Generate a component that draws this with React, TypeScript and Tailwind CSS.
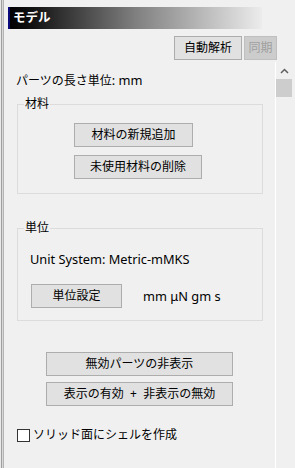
import React from "react";

const Btn = ({ children, className = "" }: { children: React.ReactNode; className?: string }) => (
  <div
    className={`h-[24px] flex items-center justify-center bg-[#e1e1e1] border border-[#adadad] text-[12px] leading-[16px] text-black ${className}`}
  >
    {children}
  </div>
);

export default function App() {
  return (
    <div className="w-[295px] h-[468px] flex bg-[#f0f0f0] overflow-hidden font-['Noto_Sans','Noto_Sans_CJK_JP',sans-serif] text-[12px] leading-[16px] text-black">
      {/* left edge */}
      <div className="w-[1px] h-full bg-[#e8e8e8]" />
      <div className="w-[1px] h-full bg-[#a0a0a0]" />
      <div className="w-[1px] h-full bg-[#d8d8d8]" />
      <div className="w-[1px] h-full bg-[#b4b4b4]" />
      <div className="flex-1 flex flex-col">
        {/* header */}
        <div className="mt-[7px] ml-[4px] w-[254px] h-[22px] flex items-center bg-[linear-gradient(to_right,#000000_0%,#151515_10%,#808080_50%,#ececec_100%)] border-l-2 border-[#0a0a7a]">
          <span className="ml-[3px] text-white font-bold text-[12.5px] leading-[16px]">モデル</span>
        </div>
        {/* top buttons */}
        <div className="mt-[7px] h-[24px] flex justify-end pr-[18px] gap-[2px]">
          <Btn className="w-[68px]">自動解析</Btn>
          <div className="w-[33px] h-[24px] flex items-center justify-center bg-[#cccccc] border border-[#bfbfbf] text-[#a0a0a0]">
            同期
          </div>
        </div>
        {/* scroll area */}
        <div className="mt-[2px] flex-1 flex">
          <div className="w-[271px] flex flex-col">
            <div className="mt-[10px] ml-[12px] h-[16px]">
              パーツの長さ単位<span className="text-[12.8px]">: mm</span>
            </div>

            <fieldset className="mt-[8px] ml-[13px] w-[246px] border border-[#dcdcdc] px-0 pt-[11px] pb-[14px] m-0">
              <legend className="ml-[6px] px-[1px] h-[16px] leading-[16px]">材料</legend>
              <div className="ml-[56px] flex flex-col gap-[8px] items-start">
                <Btn className="w-[119px]">材料の新規追加</Btn>
                <Btn className="w-[128px]">未使用材料の削除</Btn>
              </div>
            </fieldset>

            <fieldset className="mt-[26px] ml-[13px] w-[246px] border border-[#dcdcdc] px-0 pt-[15px] pb-[12px]">
              <legend className="ml-[6px] px-[1px] h-[16px] leading-[16px]">単位</legend>
              <div className="ml-[12px] h-[16px] text-[12.8px]">Unit System: Metric-mMKS</div>
              <div className="mt-[17px] ml-[13px] flex items-center">
                <Btn className="w-[91px]">単位設定</Btn>
                <span className="ml-[21px] text-[12.8px]">mm μN gm s</span>
              </div>
            </fieldset>

            <div className="mt-[31px] ml-[42px] flex flex-col gap-[6px]">
              <Btn className="w-[187px]">無効パーツの非表示</Btn>
              <Btn className="w-[187px]">表示の有効&nbsp;&nbsp;+&nbsp;&nbsp;非表示の無効</Btn>
            </div>

            <div className="mt-[21px] ml-[13px] h-[16px] flex items-center">
              <div className="w-[13px] h-[13px] border border-[#333333] bg-white" />
              <span className="ml-[3px]">ソリッド面にシェルを作成</span>
            </div>
          </div>
          <div className="w-[1px] h-full bg-white" />
          {/* scrollbar */}
          <div className="flex-1 flex flex-col items-start">
            <div className="w-[17px] h-[17px] flex items-center justify-center">
              <svg width="9" height="6" viewBox="0 0 9 6">
                <path d="M1 5 L4.5 1.5 L8 5" stroke="#606060" strokeWidth="1.5" fill="none" />
              </svg>
            </div>
            <div className="w-[16px] h-[18px] bg-[#cdcdcd]" />
          </div>
        </div>
      </div>
    </div>
  );
}
